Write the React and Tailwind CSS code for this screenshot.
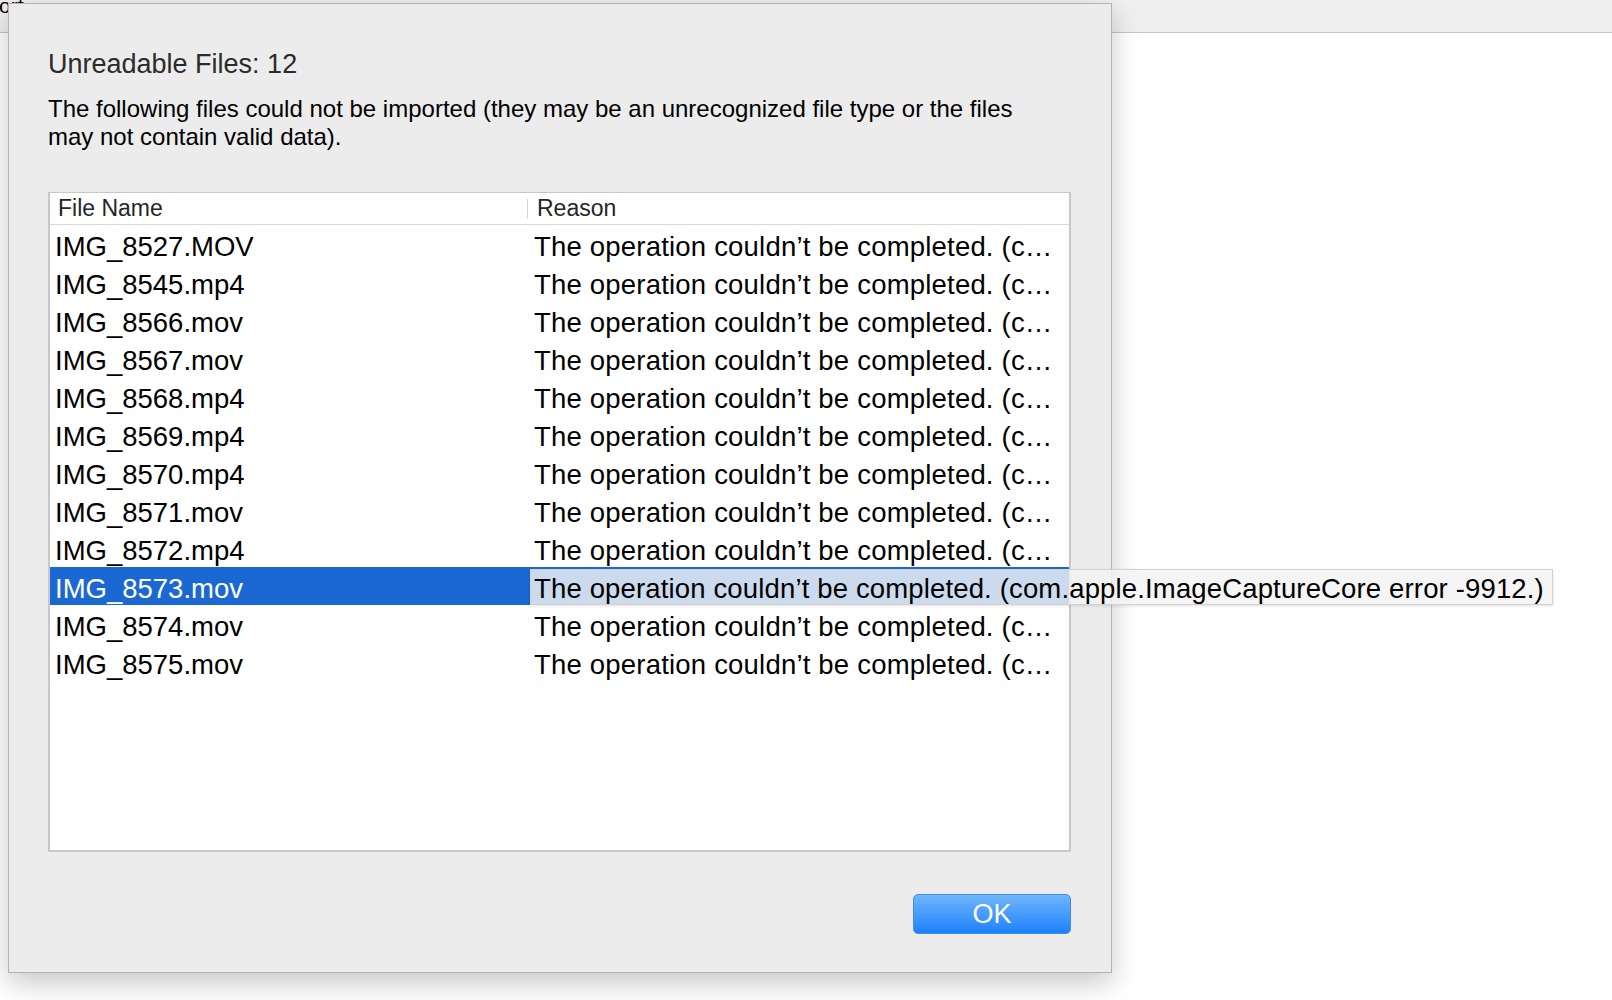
import React from "react";

const files = [
  "IMG_8527.MOV",
  "IMG_8545.mp4",
  "IMG_8566.mov",
  "IMG_8567.mov",
  "IMG_8568.mp4",
  "IMG_8569.mp4",
  "IMG_8570.mp4",
  "IMG_8571.mov",
  "IMG_8572.mp4",
  "IMG_8573.mov",
  "IMG_8574.mov",
  "IMG_8575.mov",
];

const SELECTED = "IMG_8573.mov";
const SHORT_REASON = "The operation couldn\u2019t be completed. (c\u2026";
const FULL_REASON =
  "The operation couldn\u2019t be completed. (com.apple.ImageCaptureCore error -9912.)";

const App = () => {
  return (
    <div
      className="relative w-[1612px] h-[1000px] bg-white overflow-hidden"
      style={{ fontFamily: '"Liberation Sans", Arial, sans-serif' }}
    >
      {/* window behind the sheet */}
      <div className="relative h-[33px] bg-[#efefef] border-b border-[#c6c6c6]">
        <span className="absolute left-[-36px] top-[-10px] text-[21px] text-black">Import</span>
      </div>

      {/* sheet */}
      <div className="absolute left-[8px] top-[3px] w-[1104px] h-[970px] bg-[#ececec] border border-[#b3b3b3] shadow-[0_10px_26px_rgba(0,0,0,0.22)] flex flex-col pl-[39px] pr-[40px] pt-[44px]">
        <h1 className="text-[27px] leading-[32px] text-[#2b2b2b]">Unreadable Files: 12</h1>
        <p className="mt-[15px] text-[24px] leading-[28px] text-black">
          The following files could not be imported (they may be an unrecognized file type or the files
          <br />
          may not contain valid data).
        </p>

        {/* table */}
        <div className="mt-[41px] h-[660px] bg-white border-2 border-t border-[#c8c8c8] flex flex-col">
          <div className="flex h-[32px] items-center border-b border-[#d9d9d9] text-[23px] text-[#262626]">
            <div className="w-[477px] pl-[8px]">File Name</div>
            <div className="w-px h-[20px] bg-[#d6d6d6]" />
            <div className="pl-[9px]">Reason</div>
          </div>
          {files.map((name) => {
            const selected = name === SELECTED;
            return (
              <div
                key={name}
                className={`flex h-[38px] items-center text-[27.5px] whitespace-nowrap ${
                  selected ? "bg-[#1c68d3]" : ""
                }`}
              >
                <div className={`w-[478px] pl-[5px] pt-[6px] ${selected ? "text-white" : "text-black"}`}>
                  {name}
                </div>
                <div className="relative flex-1 h-full flex items-center pl-[6px] pt-[6px] text-black tracking-[0.2px]">
                  {selected ? (
                    <div className="absolute left-[2px] top-[2px] h-[36px] z-10 flex items-center pl-[3px] pr-[8px] pt-[4px] tracking-[0.15px] bg-[rgba(243,243,243,0.82)] border border-[#d2d2d2] shadow-[0_1px_3px_rgba(0,0,0,0.12)]">
                      {FULL_REASON}
                    </div>
                  ) : (
                    SHORT_REASON
                  )}
                </div>
              </div>
            );
          })}
        </div>

        <div className="flex justify-end mt-[42px]">
          <button className="w-[158px] h-[40px] rounded-[5px] bg-gradient-to-b from-[#6eb5fb] to-[#1a80fb] border border-[#3b8fe8] text-white text-[27px] leading-none">
            OK
          </button>
        </div>
      </div>
    </div>
  );
};

export default App;
